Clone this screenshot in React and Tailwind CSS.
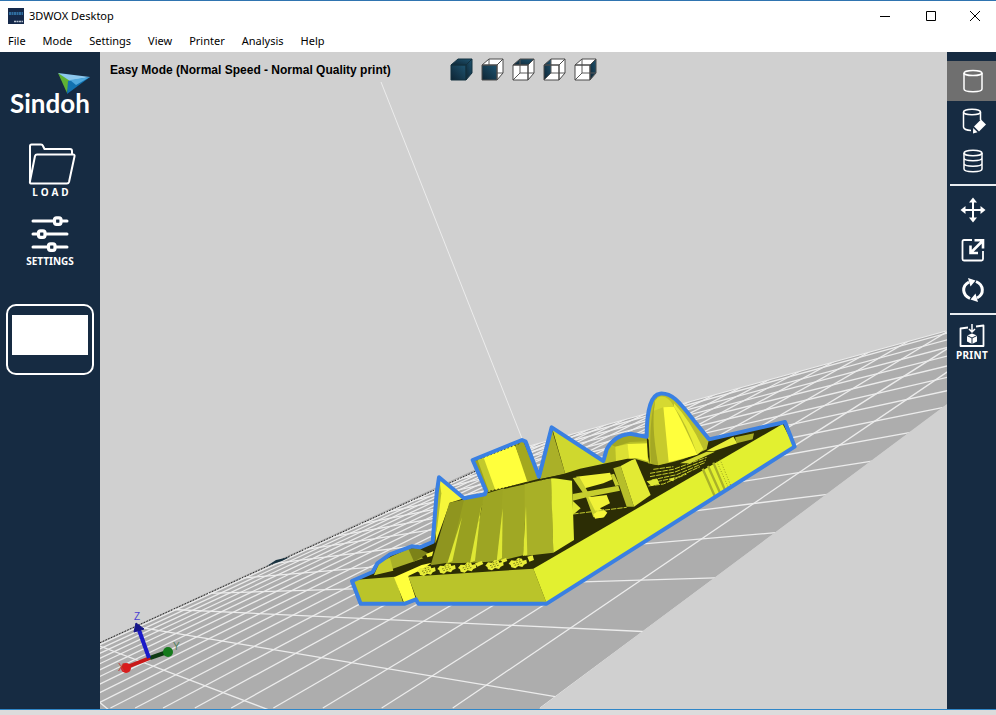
import React from "react";

const MENU = ["File", "Mode", "Settings", "View", "Printer", "Analysis", "Help"];

/* ---------- print bed ---------- */

const VANISH = { x: 1471, y: 16 };
const nearEdgeY = (x) => 407 - 0.743 * (x - 945);
const farEdgeY = (x) => 642.7 - 0.457 * (x - 100);

const crossLines = Array.from({ length: 17 }, (_, i) => {
  const k = i - 2;
  const x1 = VANISH.x - 1 / (0.0007487 + 0.0000215 * k);
  const x2 = VANISH.x - 1 / (0.001092 + 0.0001155 * k);
  return { x1, y1: farEdgeY(x1), x2, y2: nearEdgeY(x2) };
});

const longLines = Array.from({ length: 20 }, (_, j) => ({
  x1: -300 + 1 / (0.00119 + 0.0001385 * j),
  y1: 708,
  x2: VANISH.x,
  y2: VANISH.y,
}));

function Bed() {
  return (
    <g>
      <clipPath id="bed">
        <path d="M-46 709 L522 448 L946 331 L1102 288 L539 709 Z" />
      </clipPath>
      <path d="M-46 709 L522 448 L946 331 L1102 288 L539 709 Z" fill="#adadad" />
      <g clipPath="url(#bed)" stroke="#ececec" strokeWidth="1.3">
        {crossLines.map((l, i) => (
          <line key={i} {...l} />
        ))}
        {longLines.map((l, i) => (
          <line key={i} {...l} />
        ))}
      </g>
      <path d="M522 448 L946 331" stroke="#ececec" />
      <path d="M100 642.7 L476 471" stroke="#222" strokeWidth="1" strokeDasharray="1.5 1.5" />
      <path d="M267 566 L276 560 L290 557 L282 561 Z" fill="#183240" />
      <path d="M381 82 L523 441" stroke="#ececec" strokeWidth="1" />
    </g>
  );
}

/* ---------- model ---------- */

const OUTLINE =
  "M62 671 L36 603 L98 576 L112 550 L150 523 L215 499 L240 502 L278 486 L290 340 L297 292 L372 355 L435 343 L438 332 L398 240 L546 180 L557 185 L597 290 L635 142 L790 243 L800 208 Q822 166 870 161 L920 170 C920 96 932 44 960 41 C994 38 1016 62 1062 122 L1107 178 L1335 126 L1364 200 L620 671 L235 671 L228 658 L195 671 Z";

const FACES = [
  ["#bac42a", "40,600 165,590 190,670 62,670"],
  ["#ffff3c", "162,592 245,555 275,548 250,566 205,588 228,658 192,668"],
  ["#bac42a", "205,590 580,566 620,670 235,670"],
  ["#e2f030", "580,566 1328,132 1362,198 620,670"],
  ["#a9b128", "120,545 205,506 250,535 102,586"],
  ["#c5cc2c", "120,545 102,586 160,572 150,534"],
  ["#7c8218", "205,506 232,503 265,520 222,545"],
  ["#f2f23a", "258,522 280,514 276,528 262,532"],
  ["#f6f63a", "298,294 368,356 330,368 286,490"],
  ["#b4bc28", "297,292 290,340 282,488 292,440 304,340"],
  ["#c2c92c", "400,242 440,226 470,328 440,338"],
  ["#ffff3c", "430,230 524,192 566,304 466,330"],
  ["#a4a81e", "524,192 550,183 597,296 562,305"],
  ["#9da41f", "400,242 412,238 446,332 440,338"],
  ["#aab028", "635,146 676,282 600,297"],
  ["#cfd82e", "637,146 790,245 820,250 676,282"],
  ["#8f951f", "328,368 378,357 366,412 325,548 272,556"],
  ["#98a020", "372,360 438,342 420,400 395,548 325,550"],
  ["#9da523", "432,343 492,325 488,400 475,544 395,548"],
  ["#a0a824", "488,328 558,312 556,400 550,526 475,544"],
  ["#a8b027", "554,312 634,294 640,518 554,528"],
  ["#dfe834", "366,412 337,544 322,550"],
  ["#dfe834", "424,376 405,542 390,548"],
  ["#dfe834", "488,385 486,534 470,544"],
  ["#dfe834", "558,378 562,524 549,528"],
  ["#e4ef35", "633,293 696,302 702,480 640,518"],
];

const SCAFFOLD = [
  ["#f0f238", "108,290 210,278 218,298 190,310 135,325"],
  ["#c6ce2e", "98,294 118,291 185,408 160,412 138,352"],
  ["#c6ce2e", "98,342 235,317 240,332 140,352 98,362"],
  ["#f0f238", "145,352 200,345 210,370 180,385 195,395 190,412 176,414"],
  ["#dfe834", "98,362 122,385 98,405"],
  ["#f6f63a", "160,402 190,388 202,398 192,412 165,416"],
  ["#b6be2a", "220,265 242,258 282,380 260,380"],
  ["#e2ea34", "242,258 285,235 332,345 282,380"],
  ["#c6ce2e", "212,284 222,281 238,316 226,318"],
];

const DECK = [
  ["#e9ee38", "500,212 580,170 592,190 520,214"],
  ["#aab026", "585,172 642,160 638,178 590,190"],
  ["#d4da30", "420,250 500,215 525,215 450,250"],
];

function Facets({ faces }) {
  return faces.map(([fill, points]) => <polygon key={points} points={points} fill={fill} />);
}

function Dome() {
  return (
    <g>
      <path d="M190 256 L200 208 Q222 166 270 161 L320 170 L330 250 L284 236 Z" fill="#b9bf28" />
      <path d="M205 190 Q230 164 270 163 L320 172 L322 184 L270 186 L226 200 Z" fill="#a2a722" />
      <path d="M226 200 L262 192 L270 236 L228 246 Z" fill="#dce034" />
      <path d="M262 192 L326 190 L330 245 L288 234 L268 238 Z" fill="#f8f93a" />
    </g>
  );
}

function Cone() {
  return (
    <g>
      <path d="M324 250 L320 170 C320 96 332 44 360 41 C394 38 416 62 462 122 L507 178 L500 208 Q440 240 355 256 Z" fill="#bcc02a" />
      <path d="M320 170 L326 180 L330 252 L324 230 Z" fill="#2c2d05" />
      <path d="M352 44 C330 90 328 190 334 252 L355 255 C345 190 340 130 350 60 Z" fill="#a4a824" />
      <path d="M342 85 L372 80 L386 247 L355 255 C343 190 338 140 342 85 Z" fill="#c7ca2d" />
      <path d="M370 80 L386 247 L472 224 Q430 130 402 80 Z" fill="#ffff3c" />
      <path d="M402 80 Q440 130 472 224 L490 208 Q450 120 402 70 Z" fill="#e8ec36" />
      <path d="M345 62 Q358 44 376 52 Q392 60 402 80 L370 82 L342 92 Z" fill="#d6d931" />
    </g>
  );
}

function Gear({ x, y }) {
  return (
    <g transform={`translate(${x} ${y})`}>
      <path d="M-26 4 L-18 -6 L-6 -5 L2 -13 L14 -11 L16 -5 L27 -8 L29 3 L20 7 L15 14 L3 11 L-6 18 L-18 15 L-20 8 Z" fill="#e9ee38" />
      <path d="M-12 4 L12 -3 M-8 9 L16 2 M-4 -4 L8 -8" stroke="#4a4b0a" strokeWidth="2" strokeDasharray="5 4" fill="none" />
    </g>
  );
}

function Model() {
  return (
    <g transform="translate(340 380) scale(0.33333)">
      <path d={OUTLINE} fill="#2c2d05" />
      <Facets faces={FACES} />
      <path d="M410 240 L540 190 M440 335 L633 293" stroke="#3c3d08" strokeWidth="3" strokeDasharray="5 6" fill="none" />
      <Gear x={258} y={570} />
      <Gear x={318} y={563} />
      <Gear x={380} y={560} />
      <Gear x={462} y={553} />
      <Gear x={532} y={547} />
      <path d="M405 550 L425 543 L430 552 L412 560 Z M482 540 L498 534 L502 543 L488 548 Z M562 530 L578 526 L582 540 L568 545 Z" fill="#e9ee38" />
      <g transform="translate(600 0)">
        <Facets faces={SCAFFOLD} />
        <Dome />
        <path d="M0 298 L60 293 L200 262 L288 236 L262 236 L120 266 L70 282 Z" fill="#2c2d05" />
        <Facets faces={DECK} />
        <Cone />
        <g stroke="#c6cd2e" strokeWidth="3" fill="none" strokeDasharray="16 3">
          <path d="M330 280 L400 268 L500 232" />
          <path d="M330 290 L405 276 L498 240" />
          <path d="M335 300 L410 284 L494 248" />
          <path d="M350 305 L412 292 L480 260" />
          <path d="M325 318 L370 312 L440 282" />
          <path d="M340 268 L400 260" />
          <path d="M100 402 L260 382" />
        </g>
        <path d="M320 304 L352 296 L358 312 L334 318 Z M385 300 L404 292 L400 304 Z" fill="#dfe834" />
        <path d="M488 266 L524 348 M504 258 L540 338 M520 248 L554 328" stroke="#a9b12a" strokeWidth="7" fill="none" />
        <path d="M530 244 L564 320 M540 238 L572 316" stroke="#6f7518" strokeWidth="2" strokeDasharray="3 5" fill="none" />
      </g>
      <path d={OUTLINE} fill="none" stroke="#3a80e2" strokeWidth="12" strokeLinejoin="round" />
    </g>
  );
}

function Axes() {
  return (
    <g fontFamily='"Liberation Sans", sans-serif' fontSize="10">
      <path d="M150 658 L127 667" stroke="#c81818" strokeWidth="4" />
      <circle cx="126" cy="668" r="5" fill="#d81c1c" />
      <path d="M150 658 L167 652" stroke="#0d3a12" strokeWidth="4" />
      <circle cx="168" cy="652" r="5" fill="#157a1c" />
      <path d="M149 658 L139 630" stroke="#1a1ac8" strokeWidth="4" />
      <path d="M136 623 L144 629 L134 632 Z" fill="#16168a" stroke="#16168a" />
      <text x="134" y="620" fill="#4a3fd0">Z</text>
      <text x="173" y="650" fill="#4f7f5c">Y</text>
      <text x="118" y="671" fill="#c04040">X</text>
    </g>
  );
}

function Scene() {
  return (
    <svg viewBox="100 52 847 657" preserveAspectRatio="xMidYMid slice" className="absolute inset-0 size-full" aria-hidden="true">
      <Bed />
      <Model />
      <Axes />
    </svg>
  );
}

/* ---------- icons ---------- */

const FRONT = "M1 7 H16 V22 H1 Z";
const TOP = "M1 7 L8 1 H22 L16 7 Z";
const RIGHT = "M16 7 L22 1 V15 L16 22 Z";
const LEFT = "M1 7 L8 1 V15 L1 22 Z";

const VIEWS = [
  { name: "Perspective view", faces: [FRONT, TOP, RIGHT] },
  { name: "Front view", faces: [FRONT] },
  { name: "Top view", faces: [TOP] },
  { name: "Left view", faces: [LEFT] },
  { name: "Right view", faces: [RIGHT] },
];

function CubeIcon({ faces }) {
  const solid = faces.length > 1;
  return (
    <svg viewBox="0 0 23 23" className="size-[23px]" aria-hidden="true">
      <defs>
        <linearGradient id="navy" x1="0" y1="1" x2="1" y2="0">
          <stop offset="0" stopColor="#0d2433" />
          <stop offset="1" stopColor="#1f5470" />
        </linearGradient>
      </defs>
      <path d="M1 7 L8 1 H22 V15 L16 22 H1 Z" fill="#fff" />
      {faces.map((d) => (
        <path key={d} d={d} fill="url(#navy)" />
      ))}
      {!solid && faces[0] !== FRONT && <path d="M8 1 V15 H22 M8 15 L1 22" stroke="#5a5a5a" fill="none" />}
      {faces[0] === FRONT && !solid && <path d="M8 1 V7 M16 15 H22" stroke="#5a5a5a" fill="none" />}
      <path d={`${FRONT} ${TOP} ${RIGHT}`} stroke={solid ? "#12303f" : "#4a4a4a"} fill="none" />
    </svg>
  );
}

function Icon({ children, size = "size-[26px]" }) {
  return (
    <svg viewBox="0 0 26 26" className={size} fill="none" stroke="#fff" strokeWidth="1.5" aria-hidden="true">
      {children}
    </svg>
  );
}

const CylinderIcon = () => (
  <Icon>
    <ellipse cx="13" cy="5" rx="9" ry="2.6" />
    <path d="M4 5 V21 C4 24.500 22 24.500 22 21 V5" />
  </Icon>
);

const CylinderEditIcon = () => (
  <Icon>
    <ellipse cx="12" cy="4" rx="8.500" ry="2.800" />
    <path d="M3.500 4 V19 C4 21.500 7 22.300 11 22.500 M20.500 4 V12" />
    <path d="M14 18.500 L21 11.500 L26 16.500 L19 23.500 Z" fill="#fff" stroke="none" />
    <path d="M13.200 20 L17.500 24.300 L13 25.500 Z" fill="#fff" stroke="none" />
  </Icon>
);

const LayersIcon = () => (
  <Icon>
    <ellipse cx="13" cy="5" rx="9" ry="2.800" />
    <path d="M4 5 V21 C4 24.500 22 24.500 22 21 V5 M4 10 C4 13.500 22 13.500 22 10 M4 15.500 C4 19 22 19 22 15.500" />
  </Icon>
);

const MoveIcon = () => (
  <Icon>
    <path d="M13 3 V23 M3 13 H23" strokeWidth="2" />
    <path d="M13 0.500 L17 5.500 H9 Z M13 25.500 L17 20.500 H9 Z M0.500 13 L5.500 9 V17 Z M25.500 13 L20.500 9 V17 Z" fill="#fff" stroke="none" />
  </Icon>
);

const ScaleIcon = () => (
  <Icon>
    <path d="M12 3 H4 Q2.500 3 2.500 4.500 V22 Q2.500 23.500 4 23.500 H21.500 Q23 23.500 23 22 V14" strokeWidth="1.800" />
    <path d="M11 15.500 L22 4.500 M14.500 3.200 H23 V11.500 M10.500 8.500 V16 H18" strokeWidth="2.600" />
  </Icon>
);

const RotateIcon = () => (
  <Icon>
    <path d="M10 21.500 C2 18 1.500 9 9 5 M16 4.500 C24 8 24.500 17 17 21" strokeWidth="3" />
    <path d="M8 1 L15.500 3.500 L10.500 9.500 Z M18 25 L10.500 22.500 L15.500 16.500 Z" fill="#fff" stroke="none" />
  </Icon>
);

const PrintIcon = () => (
  <Icon>
    <path d="M9 4.500 L1.500 5.500 V23 H24.500 V2.500 L17 3.500" strokeWidth="1.800" strokeLinejoin="round" />
    <path d="M13 1 V8 M10 6 L13 9 L16 6" />
    <path d="M13 10.500 L18 12.500 V18.500 L13 21 L8 18.500 V12.500 Z" fill="#fff" stroke="none" />
    <path d="M8 12.500 L13 15 L18 12.500 M13 15 V21" stroke="#162b42" strokeWidth="1" />
  </Icon>
);

function FolderIcon() {
  return (
    <svg viewBox="0 0 48 42" className="h-[42px] w-12" fill="none" stroke="#fff" strokeWidth="2" strokeLinejoin="round" aria-hidden="true">
      <path d="M2 39 V3 Q2 1.500 3.500 1.500 H13 Q14.500 1.500 15 3 L16.500 6 H42 Q44 6 44 8 V11" />
      <path d="M2.500 40.500 H39 Q40.500 40.500 41 39 L46.500 13.500 Q47 11.500 45 11.500 H9 Q7.500 11.500 7 13 L2 38 Q1.500 40.500 3 40.500" />
    </svg>
  );
}

function SlidersIcon() {
  return (
    <svg viewBox="0 0 40 36" className="h-9 w-10" stroke="#fff" strokeLinecap="round" aria-hidden="true">
      <path d="M3 5 H37 M3 18 H37 M3 31 H37" strokeWidth="3" />
      <g fill="#162b42" strokeWidth="3.200">
        <rect x="24.500" y="1.800" width="6.500" height="6.500" rx="2" />
        <rect x="8.500" y="14.800" width="6.500" height="6.500" rx="2" />
        <rect x="18.500" y="27.800" width="6.500" height="6.500" rx="2" />
      </g>
    </svg>
  );
}

/* ---------- layout ---------- */

function TitleBar() {
  return (
    <header className="flex h-[30px] shrink-0 items-center justify-between bg-white pl-2">
      <div className="flex items-center gap-[5px]">
        <svg viewBox="0 0 16 16" className="size-4" aria-hidden="true">
          <rect width="16" height="16" fill="#15294a" />
          <path d="M1 5.500 H15" stroke="#2f6c9e" strokeWidth="3" strokeDasharray="2 0.500" />
          <path d="M6 13.500 H15" stroke="#b9c4d2" strokeWidth="1.500" strokeDasharray="2 0.500" />
        </svg>
        <h1 className="text-[11px]">3DWOX Desktop</h1>
      </div>
      <div className="flex">
        <button type="button" aria-label="Minimize" className="flex h-7 w-[46px] items-center justify-center">
          <svg viewBox="0 0 10 10" className="size-[10px]" stroke="#000"><path d="M0 5.500 H10" /></svg>
        </button>
        <button type="button" aria-label="Maximize" className="flex h-7 w-[46px] items-center justify-center">
          <svg viewBox="0 0 10 10" className="size-[10px]" stroke="#000" fill="none"><path d="M0.500 0.500 H9.500 V9.500 H0.500 Z" /></svg>
        </button>
        <button type="button" aria-label="Close" className="flex h-7 w-[42px] items-center justify-center">
          <svg viewBox="0 0 10 10" className="size-[10px]" stroke="#000"><path d="M0 0 L10 10 M10 0 L0 10" /></svg>
        </button>
      </div>
    </header>
  );
}

function LeftBar() {
  return (
    <aside className="flex w-[100px] shrink-0 flex-col items-center bg-[#162b42] pt-[21px] text-white">
      <div className="flex w-20 flex-col">
        <svg viewBox="0 0 32 22" className="h-[22px] w-8 self-end" aria-hidden="true">
          <path d="M0 0 L32 4 L9 9 Z" fill="#8cc8ee" />
          <path d="M0 0 L12 8 L9 20 Z" fill="#5fb233" />
          <path d="M10 8 L32 4 L9 21 Z" fill="#1272b0" />
          <path d="M12 7 L32 4 L18 12 Z" fill="#4fa9de" />
        </svg>
        <span className="-mt-2 font-['Lato','Open_Sans',sans-serif] text-[26px] leading-8 font-bold">Sindoh</span>
      </div>
      <button type="button" className="mt-6 flex flex-col items-center pl-1">
        <FolderIcon />
        <span className="-mt-px text-[10px] leading-4 font-bold tracking-[3px]">LOAD</span>
      </button>
      <button type="button" className="mt-4 flex flex-col items-center gap-px">
        <SlidersIcon />
        <span className="text-[10px] leading-4 font-bold">SETTINGS</span>
      </button>
      <button type="button" aria-label="Plate thumbnail" className="mt-[35px] h-[71px] w-[88px] rounded-[10px] border-2 border-white px-1 pt-[9px]">
        <span className="mb-[18px] block h-10 bg-white" />
      </button>
    </aside>
  );
}

function Tool({ label, active, children }) {
  return (
    <button
      type="button"
      aria-label={label}
      className={active ? "flex h-10 w-full items-center justify-center bg-[#6f6f6f] pl-0.5" : "flex h-10 w-full items-center justify-center pl-0.5"}
    >
      {children}
    </button>
  );
}

function RightBar() {
  return (
    <aside className="flex w-[49px] shrink-0 flex-col bg-[#162b42] pt-[9px] text-white">
      <Tool label="Whole model" active><CylinderIcon /></Tool>
      <Tool label="Edit model"><CylinderEditIcon /></Tool>
      <Tool label="Layer view"><LayersIcon /></Tool>
      <hr className="mt-[3px] ml-[3px] border-t-2 border-[#e8ecf0]" />
      <div className="mt-1">
        <Tool label="Move"><MoveIcon /></Tool>
        <Tool label="Scale"><ScaleIcon /></Tool>
        <Tool label="Rotate"><RotateIcon /></Tool>
      </div>
      <hr className="mt-[3px] ml-[3px] border-t-2 border-[#e8ecf0]" />
      <button type="button" className="mt-2 flex flex-col items-center pl-px">
        <PrintIcon />
        <span className="text-[10px] leading-3 font-bold tracking-wide">PRINT</span>
      </button>
    </aside>
  );
}

export default function App() {
  return (
    <div className="flex h-screen flex-col border-t border-[#2f74b0] bg-white font-['Noto_Sans','Open_Sans',sans-serif] text-black">
      <TitleBar />
      <nav className="flex h-[21px] shrink-0 items-center gap-[17px] bg-white pl-2 text-[11px]">
        {MENU.map((item) => (
          <button key={item} type="button">{item}</button>
        ))}
      </nav>
      <div className="flex min-h-0 flex-1">
        <LeftBar />
        <main className="relative min-w-0 flex-1 overflow-hidden bg-[#d0d0d0]">
          <Scene />
          <div className="relative flex items-center gap-[59px] pt-[6px] pl-[10px]">
            <p className="font-['Liberation_Sans',Arial,sans-serif] text-xs font-bold">
              Easy Mode (Normal Speed - Normal Quality print)
            </p>
            <div className="flex gap-2">
              {VIEWS.map((v) => (
                <button key={v.name} type="button" aria-label={v.name}>
                  <CubeIcon faces={v.faces} />
                </button>
              ))}
            </div>
          </div>
        </main>
        <RightBar />
      </div>
      <footer className="h-[6px] shrink-0 border-t border-[#2f86c8] bg-[#dcdcdc]" />
    </div>
  );
}
